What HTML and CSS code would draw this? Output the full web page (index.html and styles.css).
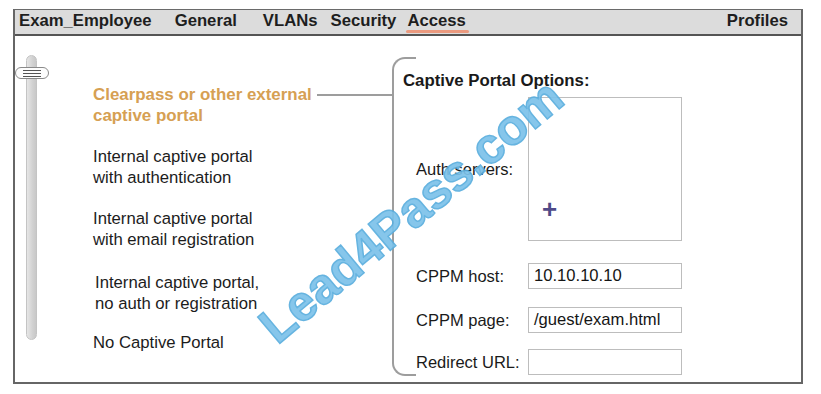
FILE: index.html
```html
<!DOCTYPE html>
<html>
<head>
<meta charset="utf-8">
<link rel="stylesheet" href="styles.css">
</head>
<body>
<div class="frame">
  <div class="tabs">
    <span class="tab tab-name">Exam_Employee</span>
    <span class="tab tab-general">General</span>
    <span class="tab tab-vlans">VLANs</span>
    <span class="tab tab-security">Security</span>
    <span class="tab tab-access active">Access</span>
    <span class="tab tab-profiles">Profiles</span>
  </div>
  <div class="content">
    <div class="slider">
      <div class="track"></div>
      <div class="handle"><span></span><span></span><span></span></div>
    </div>
    <div class="options">
      <div class="option option-selected">
        <div class="option-text">Clearpass or other external<br>captive portal</div>
        <div class="connector"></div>
      </div>
      <div class="option"><div class="option-text">Internal captive portal<br>with authentication</div></div>
      <div class="option"><div class="option-text">Internal captive portal<br>with email registration</div></div>
      <div class="option option-shift"><div class="option-text">Internal captive portal,<br>no auth or registration</div></div>
      <div class="option option-last"><div class="option-text">No Captive Portal</div></div>
    </div>
    <div class="panel">
      <div class="panel-title">Captive Portal Options:</div>
      <div class="form">
        <div class="label">Auth servers:</div>
        <div class="listbox"><span class="plus">+</span></div>
        <div class="label row-host">CPPM host:</div>
        <div class="field row-host">10.10.10.10</div>
        <div class="label">CPPM page:</div>
        <div class="field">/guest/exam.html</div>
        <div class="label row-redirect">Redirect URL:</div>
        <div class="field row-redirect"></div>
      </div>
    </div>
    <div class="watermark">Lead4Pass.com</div>
  </div>
</div>
</body>
</html>
```
FILE: styles.css
```css
html, body {
  margin: 0;
  padding: 0;
  background: #ffffff;
}
body {
  font-family: "Liberation Sans", Arial, sans-serif;
  color: #1a1a1a;
}
.frame {
  box-sizing: border-box;
  margin: 9px 0 0 13px;
  width: 790px;
  height: 375px;
  border: 2px solid #666666;
  border-top: 1px solid #6a6a6a;
  display: flex;
  flex-direction: column;
  overflow: hidden;
}
.tabs {
  display: flex;
  align-items: center;
  box-sizing: border-box;
  height: 26px;
  padding: 0 0 2px 4px;
  background: #dcdcdc;
  border-bottom: 2px solid #555555;
  font-weight: bold;
  font-size: 16.7px;
  line-height: 18px;
  color: #1e1e1e;
  flex: none;
}
.tab { position: relative; white-space: nowrap; }
.tab-general { margin-left: 23px; }
.tab-vlans { margin-left: 26px; }
.tab-security { margin-left: 13px; }
.tab-access { margin-left: 11px; }
.tab-profiles { margin-left: auto; margin-right: 13px; }
.tab.active::after {
  content: "";
  position: absolute;
  left: -1px;
  right: -3px;
  bottom: -3px;
  height: 3px;
  border-radius: 2px;
  background: #eb9a7f;
}
.content {
  position: relative;
  flex: 1;
  display: flex;
}
.slider {
  position: relative;
  width: 78px;
  flex: none;
}
.track {
  margin: 19px 0 0 11px;
  width: 11px;
  height: 285px;
  box-sizing: border-box;
  border: 1px solid #c4c4c4;
  border-radius: 6px;
  background: linear-gradient(to right, #e6e6e6, #d2d2d2 60%, #c8c8c8);
}
.handle {
  position: absolute;
  left: 0px;
  top: 31px;
  width: 34px;
  height: 12px;
  box-sizing: border-box;
  border: 1.5px solid #8a8a8a;
  border-radius: 6px / 6px;
  background: #fdfdfd;
  display: flex;
  flex-direction: column;
  justify-content: center;
  align-items: center;
  gap: 2px;
}
.handle span {
  display: block;
  width: 18px;
  height: 1px;
  background: #555555;
}
.options {
  flex: none;
  width: 299px;
  padding-top: 48px;
  display: flex;
  flex-direction: column;
  gap: 20px;
  font-size: 16.7px;
  line-height: 21px;
  color: #1c1c1c;
}
.option { display: flex; }
.option-shift { padding-left: 2px; margin-top: 2px; }
.option-last { margin-top: -2px; }
.option-selected {
  color: #d6a053;
  font-weight: bold;
  font-size: 16.9px;
}
.connector {
  flex: 1;
  height: 2px;
  background: #9d9d9d;
  margin: 10px 0 0 5px;
}
.panel {
  position: relative;
  flex: 1;
  margin-top: 21px;
  margin-bottom: 6px;
  padding: 14px 0 0 11px;
}
.panel::before {
  content: "";
  position: absolute;
  left: 0;
  top: 0;
  bottom: 0;
  width: 24px;
  box-sizing: border-box;
  border: 2px solid #9d9d9d;
  border-right: none;
  border-radius: 13px 0 0 13px;
}
.panel-title {
  font-weight: bold;
  font-size: 16.8px;
  line-height: 20px;
  color: #1a1a1a;
}
.form {
  margin: 6px 0 0 13px;
  display: grid;
  grid-template-columns: 112px 154px;
  row-gap: 18px;
  align-items: center;
  font-size: 16.5px;
}
.label {
  color: #1a1a1a;
  white-space: nowrap;
}
.row-host { margin-top: 4px; }
.row-redirect { margin-top: -2px; }
.listbox {
  position: relative;
  box-sizing: border-box;
  height: 144px;
  border: 1.5px solid #bdbdbd;
  background: #ffffff;
}
.plus {
  position: absolute;
  left: 13px;
  bottom: 21px;
  font-size: 26px;
  line-height: 20px;
  font-weight: bold;
  color: #4f4a88;
}
.field {
  box-sizing: border-box;
  height: 26px;
  border: 1.5px solid #bdbdbd;
  padding: 0 0 0 5px;
  line-height: 24px;
  font-size: 16.6px;
  color: #151515;
  white-space: nowrap;
}
.watermark {
  position: absolute;
  left: 206px;
  top: 148px;
  width: 380px;
  text-align: center;
  font-size: 50px;
  line-height: 54px;
  font-weight: bold;
  color: #7cc2ea;
  -webkit-text-stroke: 1.5px #5aaede;
  transform: rotate(-40deg);
  opacity: 0.92;
  pointer-events: none;
  white-space: nowrap;
}
```
